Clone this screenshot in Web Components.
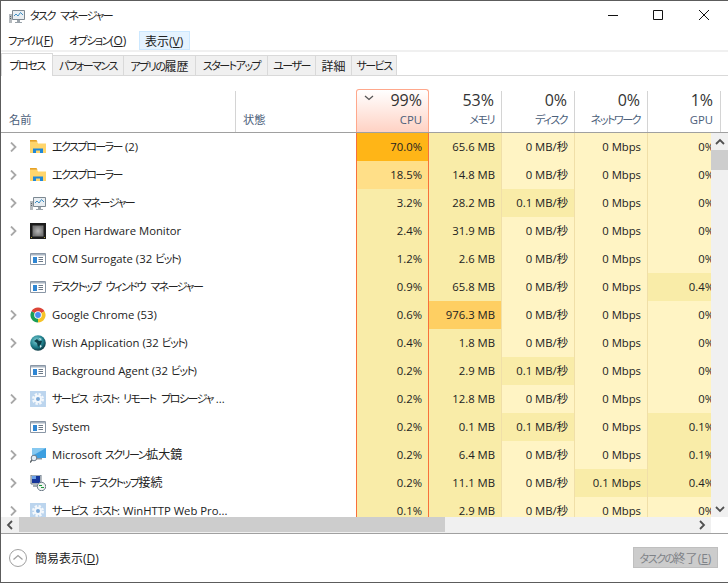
<!DOCTYPE html>
<html lang="ja">
<head>
<meta charset="utf-8">
<title>タスク マネージャー</title>
<style>
  html, body { margin: 0; background: #fff; }
  body { font: 11.3px "Open Sans", "Noto Sans CJK JP", sans-serif; font-feature-settings: "palt"; color: #222; }
  u { text-underline-offset: 1px; }
  .k { font-size: 11px; letter-spacing: -1.5px; word-spacing: 4px; }
  .j { font-size: 12px; }
</style>
</head>
<body>
<tm-app>
  <tm-titlebar>タスク マネージャー</tm-titlebar>
  <tm-menubar>
    <tm-menu w="61" style="margin-left:1px">ファイル(<u>F</u>)</tm-menu>
    <tm-menu w="76">オプション(<u>O</u>)</tm-menu>
    <tm-menu w="51" hot>表示(<u>V</u>)</tm-menu>
  </tm-menubar>
  <tm-tabs>
    <tm-tab w="52" selected>プロセス</tm-tab>
    <tm-tab w="71">パフォーマンス</tm-tab>
    <tm-tab w="72">アプリの履歴</tm-tab>
    <tm-tab w="72">スタートアップ</tm-tab>
    <tm-tab w="48">ユーザー</tm-tab>
    <tm-tab w="36">詳細</tm-tab>
    <tm-tab w="45">サービス</tm-tab>
  </tm-tabs>
  <tm-table>
    <tm-row icon="folder" arrow vals="70.0%|65.6 MB|0 MB/秒|0 Mbps|0%" heat="4 1 0 0 0">エクスプローラー (2)</tm-row>
    <tm-row icon="folder" arrow vals="18.5%|14.8 MB|0 MB/秒|0 Mbps|0%" heat="2 1 0 0 0">エクスプローラー</tm-row>
    <tm-row icon="taskmgr" arrow vals="3.2%|28.2 MB|0.1 MB/秒|0 Mbps|0%" heat="1 1 1 0 0">タスク マネージャー</tm-row>
    <tm-row icon="chip" arrow vals="2.4%|31.9 MB|0 MB/秒|0 Mbps|0%" heat="1 1 0 0 0">Open Hardware Monitor</tm-row>
    <tm-row icon="app" vals="1.2%|2.6 MB|0 MB/秒|0 Mbps|0%" heat="1 1 0 0 0">COM Surrogate (32 ビット)</tm-row>
    <tm-row icon="app" vals="0.9%|65.8 MB|0 MB/秒|0 Mbps|0.4%" heat="1 1 0 0 1">デスクトップ ウィンドウ マネージャー</tm-row>
    <tm-row icon="chrome" arrow vals="0.6%|976.3 MB|0 MB/秒|0 Mbps|0%" heat="1 3 0 0 0">Google Chrome (53)</tm-row>
    <tm-row icon="wish" arrow vals="0.4%|1.8 MB|0 MB/秒|0 Mbps|0%" heat="1 1 0 0 0">Wish Application (32 ビット)</tm-row>
    <tm-row icon="app" vals="0.2%|2.9 MB|0.1 MB/秒|0 Mbps|0%" heat="1 1 1 0 0">Background Agent (32 ビット)</tm-row>
    <tm-row icon="gear" arrow vals="0.2%|12.8 MB|0 MB/秒|0 Mbps|0%" heat="1 1 0 0 0">サービス ホスト: リモート プロシージャ ...</tm-row>
    <tm-row icon="app" vals="0.2%|0.1 MB|0.1 MB/秒|0 Mbps|0.1%" heat="1 1 1 0 1">System</tm-row>
    <tm-row icon="magnify" arrow vals="0.2%|6.4 MB|0 MB/秒|0 Mbps|0.1%" heat="1 1 0 0 1">Microsoft スクリーン拡大鏡</tm-row>
    <tm-row icon="rdp" arrow vals="0.2%|11.1 MB|0 MB/秒|0.1 Mbps|0.4%" heat="1 1 0 1 1">リモート デスクトップ接続</tm-row>
    <tm-row icon="gear" arrow vals="0.1%|2.9 MB|0 MB/秒|0 Mbps|0%" heat="1 1 0 0 0">サービス ホスト: WinHTTP Web Pro...</tm-row>
  </tm-table>
  <tm-footer>
    <span slot="less">簡易表示(<u>D</u>)</span>
    <span slot="end">タスクの終了(<u>E</u>)</span>
  </tm-footer>
</tm-app>

<script>
const ICONS = {
  folder: `
    <path d="M0 2.500h7l1 2h8v9.500H0z" fill="#ffd56b"/>
    <path d="M0 1h6.500l1 1.800H0z" fill="#e7a224"/>
    <path d="M3 14V9.500h10V14h-3v-2.500H6V14z" fill="#1f87d8"/>`,
  taskmgr: `
    <path d="M0 6h3v9H0z" fill="#b4b9bd"/>
    <path d="M1 8h1v1H1zM1 10h1v1H1z" fill="#5d6468"/>
    <path d="M3.500 2.500h12v9h-12z" fill="#e9eef2" stroke="#7d8992"/>
    <path d="M5 8l2-2 2 2 2.500-3.500L14 7" fill="none" stroke="#3f8fc4"/>
    <path d="M8 12h3v2h2v1H6v-1h2z" fill="#9aa3aa"/>`,
  chip: `
    <defs><radialGradient id="c"><stop offset="0" stop-color="#b8b8b8"/><stop offset="1" stop-color="#757575"/></radialGradient></defs>
    <path d="M0 0h16v16H0z" fill="#1c1c1c"/>
    <path d="M2.500 2.500h11v11h-11z" fill="url(#c)"/>
    <path d="M1 14h1v1H1zM14 14h1v1h-1z" fill="#b5a23c"/>`,
  app: `
    <path d="M.5 2.500h15v11H.5z" fill="#fff" stroke="#8a97a6"/>
    <path d="M1 3h14v1.500H1z" fill="#a9b4c1"/>
    <path d="M3 6h4v6H3z" fill="#2f86d3"/>
    <path d="M8.500 6.500H13M8.500 8.500H13M8.500 10.500H13" stroke="#6d7a88"/>`,
  chrome: `
    <path d="M1.500 4.250A7.500 7.500 0 0 1 14.500 4.250L8 8z" fill="#dc4437"/>
    <path d="M14.500 4.250A7.500 7.500 0 0 1 8 15.500L8 8z" fill="#f6c327"/>
    <path d="M8 15.500A7.500 7.500 0 0 1 1.500 4.250L8 8z" fill="#199d57"/>
    <circle cx="8" cy="8" r="3.800" fill="#fff"/>
    <circle cx="8" cy="8" r="2.900" fill="#4b8bf0"/>`,
  wish: `
    <defs><radialGradient id="w" cx=".4" cy=".35" r=".7"><stop offset="0" stop-color="#7fd0d6"/><stop offset=".6" stop-color="#1f7f8c"/><stop offset="1" stop-color="#0b3038"/></radialGradient></defs>
    <circle cx="8" cy="8" r="7.800" fill="url(#w)"/>
    <path d="M4 6l3-2 2 2 3 0-1 3-3 3-1-4z" fill="#0e3d46"/>
    <path d="M9 3l3 1-2 1zM10 10l2 1-2 2z" fill="#d8f0f2"/>`,
  gear: `
    <path d="M0 0h16v16H0z" fill="#bcd5ee"/>
    <circle cx="8" cy="8" r="4.800" fill="none" stroke="#f4f8fc" stroke-width="2.400" stroke-dasharray="2.300 1.470"/>
    <circle cx="8" cy="8" r="3.900" fill="#f4f8fc"/>
    <circle cx="8" cy="8" r="2" fill="#7ba9d8"/>`,
  magnify: `
    <path d="M2 1h14v10H2z" fill="#3d9fe0"/>
    <path d="M2 1h14L2 9z" fill="#86c8f0"/>
    <path d="M6 11h6v1.500H6z" fill="#8b98a4"/>
    <circle cx="4" cy="11" r="2.800" fill="#e4eef5" stroke="#6d7a88"/>
    <path d="M2 13L0 15.500" stroke="#5d6468" stroke-width="1.500"/>`,
  rdp: `
    <path d="M1 0h10v9H1z" fill="#d7dce2" stroke="#6d7a88"/>
    <path d="M2 1h8v7H2z" fill="#16369a"/>
    <path d="M2 1h4v3H2z" fill="#6aa1e8"/>
    <path d="M3 10h6v2H3z" fill="#a3adb6"/>
    <circle cx="11.500" cy="11.500" r="4.200" fill="#eef2ee" stroke="#6d7a88"/>
    <path d="M9 10.500h3M14 12.500h-3" stroke="#1c9a3a" stroke-width="1.200"/>`
}

const chevron = (d, color, w) => `<svg width="10" height="10" viewBox="0 0 10 10" style="display:block"><path d="${d}" fill="none" stroke="${color}" stroke-width="${w}"/></svg>`
const COLS = '235px 120px 73px 73px 73px 73px 73px'

// kana in the original UI font is much narrower than in Noto, so squeeze those runs
const RUNS = /[\u3040-\u30ff]+(?: [\u3040-\u30ff]+)*|[\u4e00-\u9fff]+/g
const squeezeKana = (root) => {
  const walker = document.createTreeWalker(root, NodeFilter.SHOW_TEXT)
  const nodes = []
  while (walker.nextNode()) nodes.push(walker.currentNode)
  for (const node of nodes) {
    if (!node.textContent.match(RUNS)) continue
    const tmp = document.createElement('span')
    tmp.innerHTML = node.textContent.replace(RUNS, (run) => `<span class="${run.charCodeAt(0) < 0x3100 ? 'k' : 'j'}">${run}</span>`)
    node.replaceWith(...tmp.childNodes)
  }
}
squeezeKana(document.querySelector('tm-app'))

class Base extends HTMLElement {
  constructor() {
    super()
    this.shadow = this.attachShadow({mode: 'open'})
    this.shadow.innerHTML = this.template()
  }
}

class TmApp extends Base {
  template() {
    return `
      <style>
        :host {
          display: flex;
          flex-direction: column;
          box-sizing: border-box;
          width: 728px;
          height: 583px;
          border: solid #5c5c5c;
          border-width: 1px 0 1px 1px;
          overflow: hidden;
        }
      </style>
      <slot></slot>
    `
  }
}

class TmIcon extends Base {
  template() {
    return `
      <style>
        :host { display: block; width: 16px; height: 16px; flex: none; }
        svg { display: block; }
      </style>
      <svg width="16" height="16" viewBox="0 0 16 16"></svg>
    `
  }
  static get observedAttributes() { return ['name'] }
  attributeChangedCallback() {
    this.shadow.querySelector('svg').innerHTML = ICONS[this.getAttribute('name')] || ''
  }
}

class TmTitlebar extends Base {
  template() {
    return `
      <style>
        :host {
          display: flex;
          align-items: center;
          height: 29px;
          flex: none;
          color: #222;
          font-size: 12px;
        }
        tm-icon { margin: 0 5px 0 8px; }
        .title { flex: 1; padding-bottom: 1px; }
        .btns { display: flex; gap: 35px; padding: 9px 19px 10px 0; }
        .btns svg { display: block; }
        .btns svg:last-child { margin-left: 1px; }
      </style>
      <tm-icon name="taskmgr"></tm-icon>
      <div class="title"><slot></slot></div>
      <div class="btns">
        <svg width="10" height="10"><path d="M0 5.500h10" stroke="#111"/></svg>
        <svg width="10" height="10"><path d="M.5 .5h9v9h-9z" fill="none" stroke="#111"/></svg>
        <svg width="10" height="10"><path d="M0 0l10 10M10 0L0 10" fill="none" stroke="#111"/></svg>
      </div>
    `
  }
}

class TmMenubar extends Base {
  template() {
    return `
      <style>
        :host {
          display: flex;
          box-sizing: border-box;
          height: 22px;
          padding-top: 1px;
          flex: none;
          border-bottom: 2px solid #f0f0f0;
          font-size: 12px;
        }
      </style>
      <slot></slot>
    `
  }
}

class TmMenu extends Base {
  template() {
    return `
      <style>
        :host {
          display: flex;
          align-items: center;
          box-sizing: border-box;
          height: 19px;
          padding: 0 0 0 5px;
          border: 1px solid transparent;
          white-space: nowrap;
        }
        :host([hot]) { background: #e5f3ff; border-color: #cce8ff; }
      </style>
      <span><slot></slot></span>
    `
  }
  connectedCallback() {
    this.style.width = this.getAttribute('w') + 'px'
  }
}

class TmTabs extends Base {
  template() {
    return `
      <style>
        :host {
          display: flex;
          align-items: flex-end;
          box-sizing: border-box;
          height: 24px;
          flex: none;
          border-bottom: 1px solid #d9d9d9;
          margin-bottom: 13px;
          font-size: 12px;
        }
      </style>
      <slot></slot>
    `
  }
}

class TmTab extends Base {
  template() {
    return `
      <style>
        :host {
          display: flex;
          align-items: center;
          justify-content: center;
          box-sizing: border-box;
          height: 20px;
          background: #f0f0f0;
          border: solid #d9d9d9;
          border-width: 1px 1px 0 0;
          white-space: nowrap;
          color: #222;
        }
        :host([selected]) {
          height: 23px;
          margin-bottom: -1px;
          background: #fff;
          border-left-width: 1px;
          position: relative;
        }
      </style>
      <span><slot></slot></span>
    `
  }
  connectedCallback() {
    this.style.width = this.getAttribute('w') + 'px'
  }
}

class TmTable extends Base {
  template() {
    return `
      <style>
        :host { display: block; flex: none; }
        .k { font-size: 11px; letter-spacing: -1.5px; }
        .head {
          display: grid;
          grid-template-columns: ${COLS};
          grid-template-rows: 43px;
          height: 44px;
          box-sizing: border-box;
          border-bottom: 1px solid #a0a0a0;
          overflow: hidden;
          color: #4c607a;
        }
        .h {
          display: flex;
          flex-direction: column;
          justify-content: flex-end;
          align-items: flex-end;
          box-sizing: border-box;
          margin-top: 2px;
          padding: 0 7px 4px 0;
          border-right: 1px solid #d4d4d4;
          white-space: nowrap;
        }
        .h.text { align-items: flex-start; padding-left: 8px; }
        .h.status { padding-left: 7px; border-right: 0; }
        .pct { font-size: 16px; line-height: 20px; color: #333; margin-bottom: 2px; }
        .label { line-height: 16px; }
        .h.cpu {
          margin-top: 0;
          position: relative;
          border: 1px solid #ffa88c;
          border-bottom: 0;
          border-radius: 3px 3px 0 0;
          background: linear-gradient(#fff, #ffd2c4);
          padding: 0 6px 4px 0;
        }
        .sort { position: absolute; left: 7px; top: 3px; }
        .mid { display: grid; grid-template-columns: 710px 17px; height: 384px; }
        .rows { overflow: hidden; }
        .vbar {
          display: flex;
          flex-direction: column;
          align-items: center;
          background: #f0f0f0;
        }
        .vbar .btn { height: 17px; width: 17px; display: flex; align-items: center; justify-content: center; flex: none; }
        .vbar .thumb { width: 17px; height: 20px; background: #cdcdcd; flex: none; }
        .vbar .gap { flex: 1; }
        .hbar { display: flex; height: 16px; }
        .hbar .btn { width: 18px; flex: none; display: flex; align-items: center; justify-content: center; }
        .hbar .thumb { width: 426px; height: 15px; background: #cdcdcd; flex: none; }
        .hbar .track { width: 710px; display: flex; background: #f0f0f0; }
        .hbar .gap { flex: 1; }
      </style>
      <div class="head">
        <div class="h text"><span class="label">名前</span></div>
        <div class="h text status"><span class="label">状態</span></div>
        <div class="h cpu">
          <span class="sort">${chevron('M1 3l4 3.500L9 3', '#555', 1.3)}</span>
          <span class="pct">99%</span><span class="label">CPU</span>
        </div>
        <div class="h"><span class="pct">53%</span><span class="label"><span class="k">メモリ</span></span></div>
        <div class="h"><span class="pct">0%</span><span class="label"><span class="k">ディスク</span></span></div>
        <div class="h"><span class="pct">0%</span><span class="label"><span class="k">ネットワーク</span></span></div>
        <div class="h"><span class="pct">1%</span><span class="label">GPU</span></div>
      </div>
      <div class="mid">
        <div class="rows"><slot></slot></div>
        <div class="vbar">
          <div class="btn">${chevron('M1 7l4-4 4 4', '#505050', 1.8)}</div>
          <div class="thumb"></div>
          <div class="gap"></div>
          <div class="btn">${chevron('M1 3l4 4 4-4', '#505050', 1.8)}</div>
        </div>
      </div>
      <div class="hbar">
        <div class="track">
          <div class="btn">${chevron('M7 1L3 5l4 4', '#505050', 1.8)}</div>
          <div class="thumb"></div>
          <div class="gap"></div>
          <div class="btn">${chevron('M3 1l4 4-4 4', '#505050', 1.8)}</div>
        </div>
      </div>
    `
  }
}

class TmRow extends Base {
  template() {
    return `
      <style>
        :host {
          display: grid;
          grid-template-columns: ${COLS};
          height: 28px;
          color: #222;
          line-height: 16px;
        }
        .name {
          display: flex;
          align-items: center;
          white-space: nowrap;
          overflow: hidden;
        }
        .arrow { box-sizing: border-box; width: 29px; padding-left: 8px; flex: none; }
        tm-icon { margin-right: 6px; }
        .txt { padding-bottom: 1px; }
        .cell {
          display: flex;
          align-items: center;
          justify-content: flex-end;
          box-sizing: border-box;
          padding: 0 6px 1px 0;
          border-right: 1px solid #f0dfa8;
          white-space: nowrap;
        }
        .h0 { background: #fff4c4; }
        .h1 { background: #f9eca8; }
        .h2 { background: #ffdf88; }
        .h3 { background: #fecf62; }
        .h4 { background: #ffb517; }
        .c0 { border-left: 1px solid #f8703a; border-right-color: #f8703a; }
        .c4 { border-right: 0; padding-right: 7px; }
      </style>
      <div class="name"><span class="arrow"></span><tm-icon></tm-icon><span class="txt"><slot></slot></span></div>
      <div></div>
    `
  }
  connectedCallback() {
    const vals = this.getAttribute('vals').split('|')
    const heat = this.getAttribute('heat').split(' ')
    const icon = this.shadow.querySelector('tm-icon')
    icon.setAttribute('name', this.getAttribute('icon'))
    if (this.hasAttribute('arrow')) {
      this.shadow.querySelector('.arrow').innerHTML = chevron('M2 .5l4.500 4.500-4.500 4.500', '#a8a8a8', 1.8)
    }
    vals.forEach((v, i) => {
      const cell = document.createElement('div')
      cell.className = `cell h${heat[i]} c${i}`
      cell.textContent = v
      this.shadow.appendChild(cell)
    })
  }
}

class TmFooter extends Base {
  template() {
    return `
      <style>
        :host {
          display: flex;
          align-items: center;
          justify-content: space-between;
          flex: 1;
          border-top: 1px solid #a0a0a0;
          padding: 0 10px 0 8px;
          font-size: 12px;
        }
        .less { display: flex; align-items: center; gap: 8px; }
        svg { display: block; }
        .end {
          display: flex;
          align-items: center;
          justify-content: center;
          box-sizing: border-box;
          width: 85px;
          height: 21px;
          margin-top: -1px;
          background: #cccccc;
          border: 1px solid #bfbfbf;
          color: #7f8388;
          white-space: nowrap;
        }
      </style>
      <div class="less">
        <svg width="18" height="18"><circle cx="9" cy="9" r="8.500" fill="#fff" stroke="#a0a0a0"/><path d="M4.500 10.500L9 6.500l4.500 4" fill="none" stroke="#a0a0a0" stroke-width="1.300"/></svg>
        <slot name="less"></slot>
      </div>
      <div class="end"><slot name="end"></slot></div>
    `
  }
}

customElements.define('tm-icon', TmIcon)
customElements.define('tm-app', TmApp)
customElements.define('tm-titlebar', TmTitlebar)
customElements.define('tm-menubar', TmMenubar)
customElements.define('tm-menu', TmMenu)
customElements.define('tm-tabs', TmTabs)
customElements.define('tm-tab', TmTab)
customElements.define('tm-table', TmTable)
customElements.define('tm-row', TmRow)
customElements.define('tm-footer', TmFooter)
</script>
</body>
</html>
